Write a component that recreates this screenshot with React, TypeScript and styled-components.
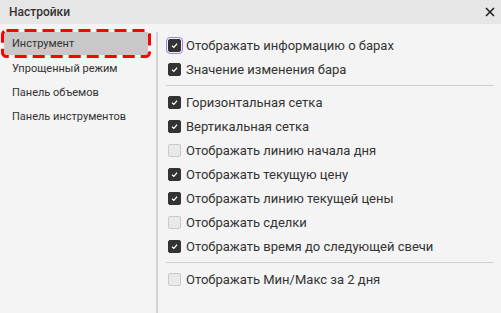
import React, { FC } from 'react'
import styled, { createGlobalStyle } from 'styled-components'

const GlobalStyle = createGlobalStyle`
  html, body {
    margin: 0;
    padding: 0;
    background: #f4f4f4;
  }
  body {
    font-family: Roboto, 'Noto Sans', sans-serif;
    color: #333;
  }
`

type Option = { label: string; checked: boolean; focused?: boolean }

const groups: Option[][] = [
  [
    { label: 'Отображать информацию о барах', checked: true, focused: true },
    { label: 'Значение изменения бара', checked: true },
  ],
  [
    { label: 'Горизонтальная сетка', checked: true },
    { label: 'Вертикальная сетка', checked: true },
    { label: 'Отображать линию начала дня', checked: false },
    { label: 'Отображать текущую цену', checked: true },
    { label: 'Отображать линию текущей цены', checked: true },
    { label: 'Отображать сделки', checked: false },
    { label: 'Отображать время до следующей свечи', checked: true },
  ],
  [{ label: 'Отображать Мин/Макс за 2 дня', checked: false }],
]

const tabs = ['Инструмент', 'Упрощенный режим', 'Панель объемов', 'Панель инструментов']

const Check: FC<{ checked: boolean; focused?: boolean }> = ({ checked, focused }) => (
  <Box $checked={checked} $focused={focused}>
    {checked && (
      <svg width="9" height="9" viewBox="0 0 9 9">
        <path d="M2 4.8 L3.8 6.4 L7 2.8" fill="none" stroke="#fff" strokeWidth="1.3" />
      </svg>
    )}
  </Box>
)

export default function App() {
  return (
    <Window>
      <GlobalStyle />
      <Header>
        <Title>Настройки</Title>
        <CloseBtn>
          <svg width="10" height="10" viewBox="0 0 10 10">
            <path d="M1 1 L9 9 M9 1 L1 9" stroke="#222" strokeWidth="1.6" />
          </svg>
        </CloseBtn>
      </Header>
      <Body>
        <Sidebar>
          {tabs.map((t, i) => (
            <Tab key={t} $active={i === 0}>
              {t}
              {i === 0 && (
                <Highlight width="150" height="30" viewBox="0 0 150 30">
                  <rect
                    x="1.5"
                    y="1.5"
                    width="147"
                    height="26"
                    rx="4"
                    fill="none"
                    stroke="#f00"
                    strokeWidth="3"
                    strokeDasharray="12 6"
                  />
                </Highlight>
              )}
            </Tab>
          ))}
        </Sidebar>
        <Content>
          {groups.map((group, gi) => (
            <React.Fragment key={gi}>
              {gi > 0 && <Separator />}
              {group.map((o) => (
                <Row key={o.label}>
                  <Check checked={o.checked} focused={o.focused} />
                  <Label>{o.label}</Label>
                </Row>
              ))}
            </React.Fragment>
          ))}
        </Content>
      </Body>
    </Window>
  )
}

const Window = styled.div`
  width: 501px;
  height: 313px;
  display: flex;
  flex-direction: column;
  background: #f4f4f4;
  overflow: hidden;
`

const Header = styled.div`
  height: 24px;
  flex-shrink: 0;
  display: flex;
  align-items: center;
  justify-content: space-between;
  padding: 0 5px 0 9px;
  background: #e6e6e6;
`

const Title = styled.div`
  font-size: 12px;
  font-weight: 500;
  color: #333;
`

const CloseBtn = styled.div`
  width: 12px;
  height: 12px;
  display: flex;
  align-items: center;
  justify-content: center;
`

const Body = styled.div`
  flex: 1;
  display: flex;
`

const Sidebar = styled.div`
  width: 156px;
  flex-shrink: 0;
  margin-top: 8px;
  border-right: 2px solid #d2d2d2;
  display: flex;
  flex-direction: column;
`

const Tab = styled.div<{ $active?: boolean }>`
  position: relative;
  height: 24px;
  margin-left: 4px;
  width: 144px;
  box-sizing: border-box;
  padding-left: 8px;
  display: flex;
  align-items: center;
  font-size: 11px;
  color: #333;
  background: ${(p) => (p.$active ? '#c8c8c8' : 'transparent')};
  ${(p) => p.$active && 'height: 23px; margin-bottom: 1px;'}
`

const Highlight = styled.svg`
  position: absolute;
  left: -3px;
  top: -3px;
  pointer-events: none;
`

const Content = styled.div`
  flex: 1;
  padding: 9px 7px 0 8px;
  display: flex;
  flex-direction: column;
`

const Row = styled.div`
  height: 24px;
  display: flex;
  align-items: center;
  padding-left: 2px;
  gap: 5px;
`

const Box = styled.span<{ $checked: boolean; $focused?: boolean }>`
  width: 13px;
  height: 13px;
  box-sizing: border-box;
  border-radius: 2px;
  display: flex;
  align-items: center;
  justify-content: center;
  background: ${(p) => (p.$checked ? '#333' : '#e9e9e9')};
  border: 1px solid ${(p) => (p.$checked ? '#333' : '#cacaca')};
  outline: ${(p) => (p.$focused ? '1px solid #9d7ff0' : 'none')};
  outline-offset: 1px;
`

const Label = styled.span`
  font-size: 13px;
  color: #333;
`

const Separator = styled.div`
  height: 1px;
  background: #cfcfcf;
  margin: 4px 0;
`
